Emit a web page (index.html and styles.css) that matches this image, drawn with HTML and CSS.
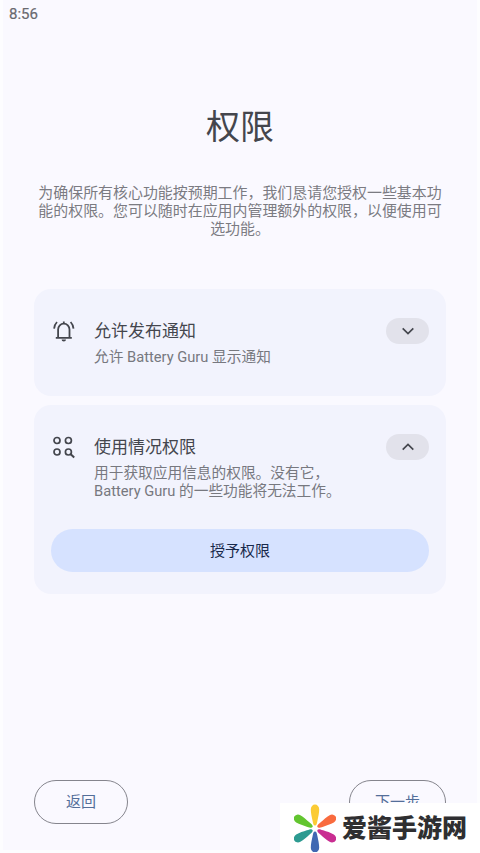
FILE: index.html
```html
<!DOCTYPE html>
<html lang="zh-CN">
<head>
<meta charset="utf-8">
<meta name="viewport" content="width=device-width, initial-scale=1">
<title>权限</title>
<link rel="stylesheet" href="styles.css">
</head>
<body>
<div class="screen">
  <div class="status">8:56</div>
  <h1 class="title">权限</h1>
  <p class="intro">为确保所有核心功能按预期工作，我们恳请您授权一些基本功<br>能的权限。您可以随时在应用内管理额外的权限，以便使用可<br>选功能。</p>
  <main class="cards">
    <section class="card card-notify">
      <div class="row">
        <svg class="icon" viewBox="0 0 24 24" fill="none" stroke="currentColor" stroke-width="1.8">
          <path d="M4.8 18.8H20.8M7.1 18.8V10.6a5.7 6 0 0 1 11.4 0V18.8M12.8 5V2.6" />
          <path d="M3.1 9.6Q3.3 5.8 6 3M22.5 9.6Q22.3 5.8 19.6 3" />
          <path d="M10.6 20.4h4.4a2.2 2 0 0 1-4.4 0z" fill="currentColor" stroke="none" />
        </svg>
        <div class="text">
          <h2>允许发布通知</h2>
          <p>允许 Battery Guru 显示通知</p>
        </div>
        <button class="toggle" aria-label="展开"><svg viewBox="0 0 14 8"><path d="M1.7 1.3 7 6.5l5.3-5.2" /></svg></button>
      </div>
    </section>
    <section class="card card-usage">
      <div class="row">
        <svg class="icon" viewBox="0 0 24 24" fill="none" stroke="currentColor" stroke-width="1.7">
          <circle cx="6" cy="5.5" r="3" /><circle cx="17.4" cy="5.5" r="3" />
          <circle cx="6" cy="17" r="3" /><circle cx="17.4" cy="17" r="3" />
          <path d="M19.5 19.1 23.2 22.6" stroke-width="2" />
        </svg>
        <div class="text">
          <h2>使用情况权限</h2>
          <p>用于获取应用信息的权限。没有它，<br>Battery Guru 的一些功能将无法工作。</p>
        </div>
        <button class="toggle" aria-label="收起"><svg viewBox="0 0 14 8"><path d="M1.7 6.7 7 1.5l5.3 5.2" /></svg></button>
      </div>
      <button class="grant">授予权限</button>
    </section>
  </main>
  <footer class="nav">
    <button class="outlined back">返回</button>
    <button class="outlined next">下一步</button>
  </footer>
</div>
<div class="brand">
  <svg class="flower" viewBox="0 0 42 48">
    <defs><path id="petal" d="M21 21.6C19.4 21.6 19.2 20 18.5 16.5 17.8 12.8 16.8 9 16.8 5.2a4.2 4.6 0 0 1 8.4 0C25.2 9 24.2 12.8 23.5 16.5 22.8 20 22.6 21.6 21 21.6z" /></defs>
    <use href="#petal" fill="#fbcb35" />
    <use href="#petal" fill="#f96b3e" transform="rotate(60 21 24.5)" />
    <use href="#petal" fill="#c92d91" transform="rotate(120 21 24.5)" />
    <use href="#petal" fill="#4068b2" transform="rotate(180 21 24.5)" />
    <use href="#petal" fill="#2d9b91" transform="rotate(240 21 24.5)" />
    <use href="#petal" fill="#62c52f" transform="rotate(300 21 24.5)" />
  </svg>
  <span>爱酱手游网</span>
</div>
</body>
</html>
```
FILE: styles.css
```css
* { box-sizing: border-box; }
body {
  margin: 0;
  height: 853px;
  overflow: hidden;
  position: relative;
  padding: 0 3px 3px;
  background: #fdfdff;
  font-family: Roboto, "Noto Sans CJK SC", sans-serif;
  color: #44464d;
}
h1, h2, p { margin: 0; font-weight: 400; }
button { border: 0; padding: 0; font: inherit; color: inherit; }
.screen {
  height: 850px;
  background: #faf9ff;
  display: flex;
  flex-direction: column;
}
.status {
  height: 28px;
  padding-left: 6px;
  font-size: 15px;
  line-height: 28px;
  color: #69696f;
  -webkit-text-stroke: 0.2px;
}
.title {
  margin-top: 74px;
  height: 50px;
  font-size: 34px;
  line-height: 50px;
  text-align: center;
}
.intro {
  margin-top: 33px;
  font-size: 14.95px;
  line-height: 17.8px;
  text-align: center;
  white-space: nowrap;
  color: #7b7b82;
}
.cards {
  margin: 51px 31px 0;
  display: flex;
  flex-direction: column;
  gap: 9px;
}
.card { background: #f2f3fd; border-radius: 17px; padding: 29px 17px 0; }
.card-notify { height: 107px; }
.card-usage { height: 189px; }
.row { display: flex; align-items: flex-start; }
.icon { width: 24px; height: 24px; margin-top: 1px; flex: none; }
.text { margin: 1px 0 0 19px; flex: 1; white-space: nowrap; }
.text h2 { font-size: 17px; line-height: 25px; }
.text p { font-size: 14.7px; line-height: 18px; color: #77787f; }
.card-notify .text p { margin-top: 4px; }
.card-usage .text p { margin-top: 4px; }
.toggle {
  width: 43px;
  height: 26px;
  border-radius: 13px;
  background: #e2e2eb;
  display: flex;
  align-items: center;
  justify-content: center;
}
.toggle svg { width: 14px; height: 8px; fill: none; stroke: #44464d; stroke-width: 1.7; }
.card-usage .row { height: 66px; }
.grant {
  display: block;
  width: 100%;
  height: 43px;
  margin-top: 29px;
  padding-top: 1px;
  border-radius: 22px;
  background: #d6e2ff;
  color: #18294b;
  font-size: 15px;
  line-height: 42px;
}
.nav {
  margin: auto 31px 26px;
  display: flex;
  justify-content: space-between;
}
.outlined {
  height: 44px;
  padding-bottom: 3px;
  border: 1px solid #85858d;
  border-radius: 22px;
  background: transparent;
  color: #536e99;
  font-size: 15px;
}
.back { width: 94px; }
.next { width: 97px; }
.brand {
  position: absolute;
  left: 280px;
  top: 803px;
  width: 200px;
  height: 50px;
  padding-left: 14px;
  background: #fff;
  display: flex;
  align-items: center;
}
.flower { width: 42px; height: 48px; flex: none; }
.brand span {
  margin: 2px 0 0 6px;
  font-size: 25px;
  line-height: 36px;
  font-weight: 900;
  color: #2f2f31;
  white-space: nowrap;
}
```
